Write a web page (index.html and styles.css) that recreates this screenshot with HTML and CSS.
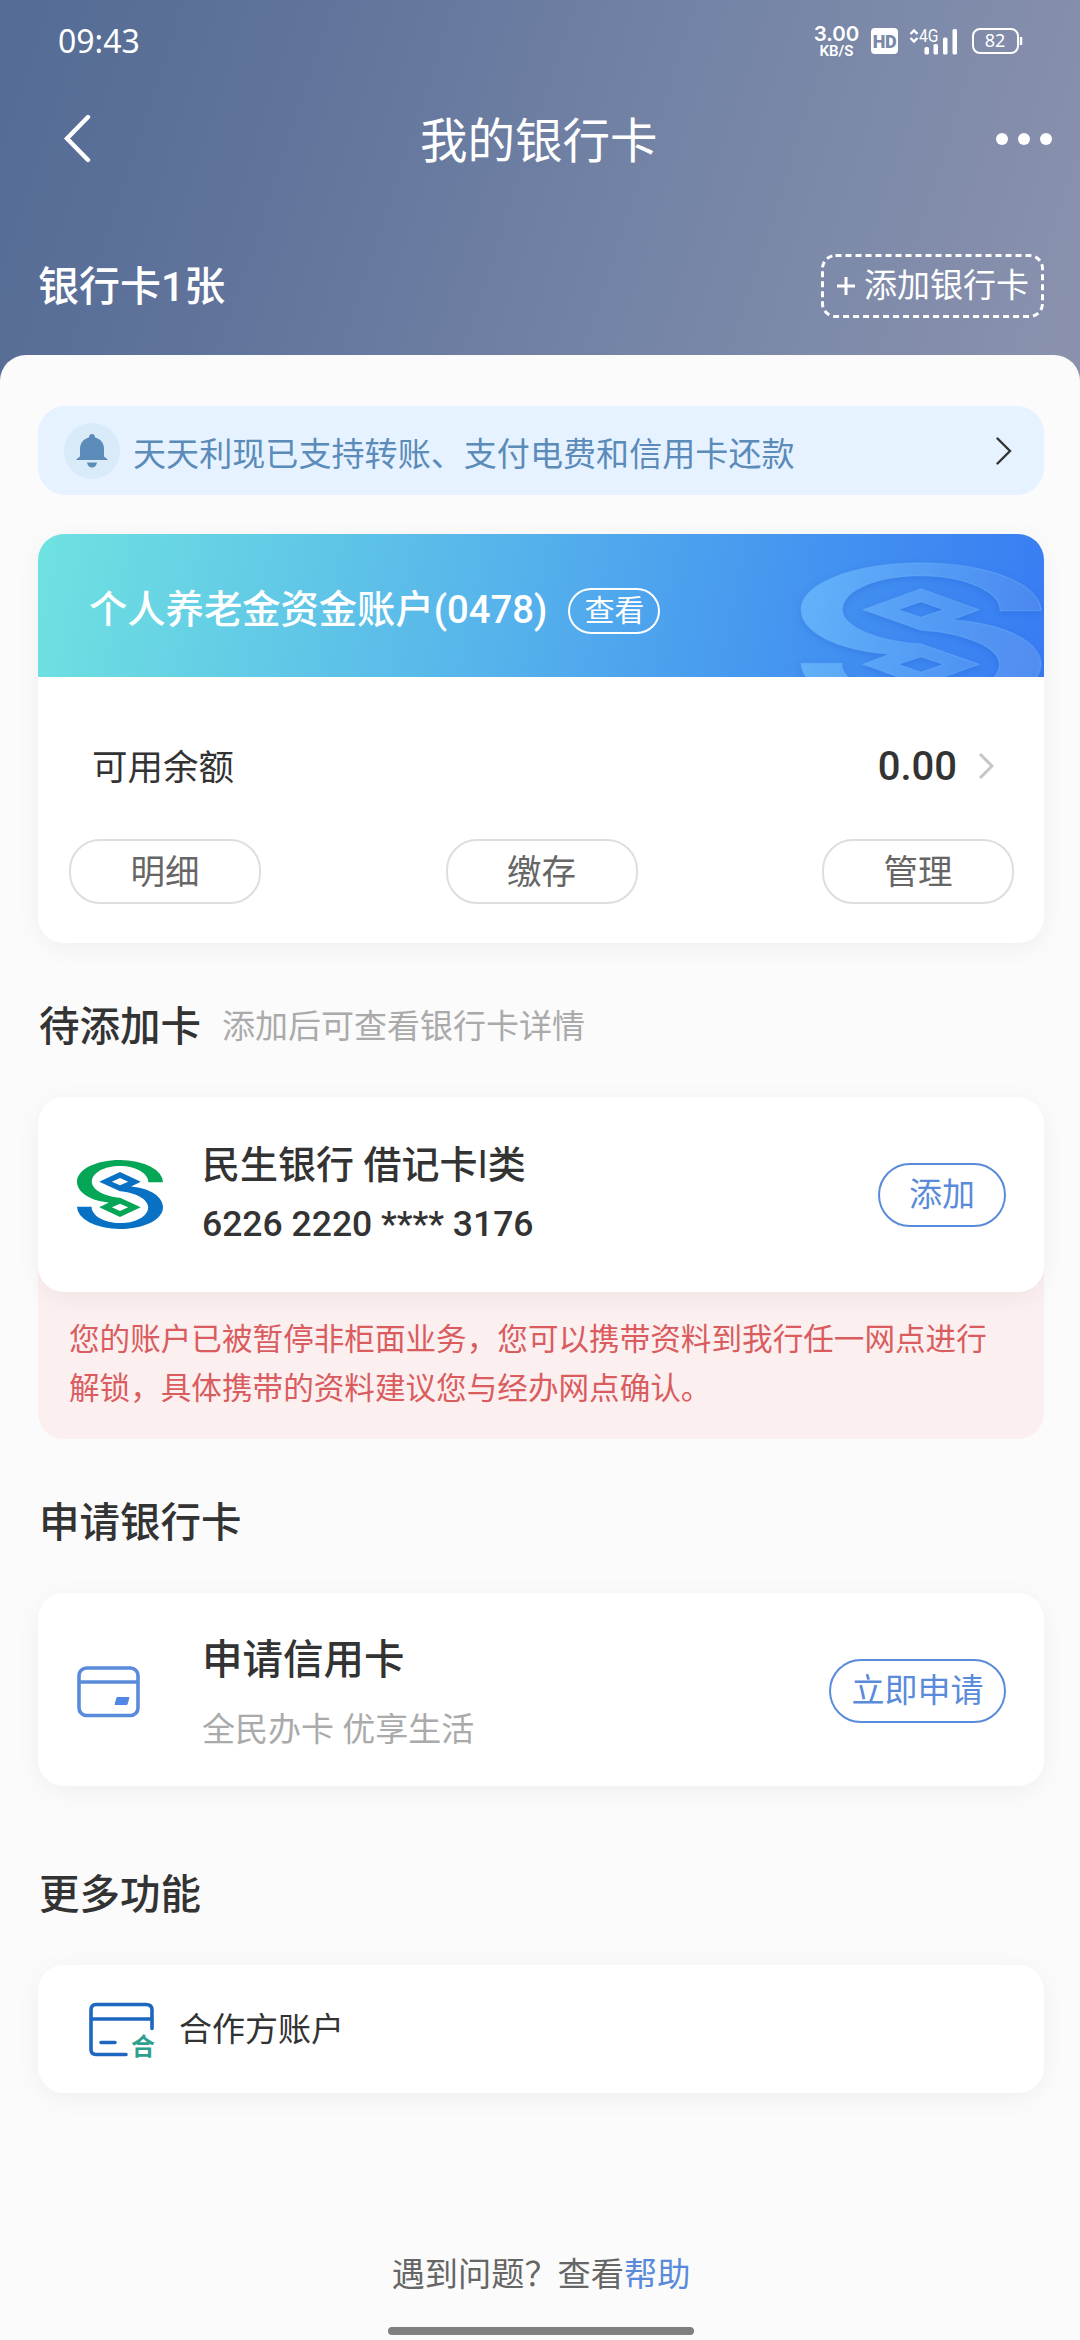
FILE: index.html
```html
<!DOCTYPE html>
<html lang="zh-CN">
<head>
<meta charset="utf-8">
<title>我的银行卡</title>
<link rel="stylesheet" href="styles.css">
</head>
<body>
<svg class="defs" width="0" height="0" aria-hidden="true">
  <defs>
    <path id="logo-upper" fill-rule="evenodd" d="M696 143A348 143 0 0 0 348 0C150 0 0 62 0 140C0 205 100 262 258 273L180 304L348 367L516 304L348 243C220 235 120 190 120 140C120 82 220 38 348 38C475 38 578 85 578 143ZM282 304L348 281L414 304L348 328Z"/>
  </defs>
</svg>
<div class="page">
  <header class="hero">
    <div class="status">
      <span class="clock">09:43</span>
      <div class="speed"><b>3.00</b><small>KB/S</small></div>
      <span class="hd">HD</span>
      <svg class="signal" viewBox="0 -6 50 40" width="50" height="40">
        <path d="M2.500 7L6 3.500L9.500 7M2.500 11L6 14.500L9.500 11" fill="none" stroke="#fff" stroke-width="2.400"/>
        <text x="11" y="15" font-size="18" textLength="19.500" lengthAdjust="spacingAndGlyphs" fill="#fff">4G</text>
        <g fill="#fff"><rect x="16.500" y="20" width="4.500" height="7.500" rx="1.500"/><rect x="25.500" y="17" width="4.500" height="10.500" rx="1.500"/><rect x="35" y="10.500" width="4.500" height="17" rx="1.500"/><rect x="44.500" y="2" width="4.500" height="25.500" rx="1.500"/></g>
      </svg>
      <svg class="battery" viewBox="0 0 51 26" width="51" height="26">
        <rect x="1" y="1" width="45" height="24" rx="7" fill="none" stroke="#fff" stroke-width="2"/>
        <path d="M49 9V17" stroke="#fff" stroke-width="2.500"/>
        <text x="23" y="19" font-size="18" text-anchor="middle" fill="#fff">82</text>
      </svg>
    </div>
    <nav class="nav">
      <svg class="back" viewBox="0 0 28 48" width="28" height="48"><path d="M25 2L4 23.500L25 45" fill="none" stroke="#fff" stroke-width="4.400" stroke-linecap="round"/></svg>
      <h1>我的银行卡</h1>
      <svg class="dots" viewBox="0 0 58 14" width="58" height="14" fill="#fff"><circle cx="7" cy="7" r="6"/><circle cx="29" cy="7" r="6"/><circle cx="51" cy="7" r="6"/></svg>
    </nav>
    <div class="summary">
      <h2>银行卡1张</h2>
      <button class="add-card">
        <svg class="dash" width="223" height="64" viewBox="0 0 223 64"><rect x="1.500" y="1.500" width="220" height="61" rx="13" fill="none" stroke="#fff" stroke-width="3" stroke-dasharray="6 4"/></svg>
        <svg width="18" height="18" viewBox="0 0 18 18"><path d="M9 0V18M0 9H18" stroke="#fff" stroke-width="3"/></svg>
        <span>添加银行卡</span>
      </button>
    </div>
  </header>
  <main class="sheet">
    <div class="notice">
      <span class="bell"><svg viewBox="0 0 32 34" width="32" height="34" fill="#5b8bb9"><path d="M16 0C18 0 19 1.500 19 3.500C25 5 28 9.500 28 15V22C28 23.500 31.500 24 31.500 26H.5C.5 24 4 23.500 4 22V15C4 9.500 7 5 13 3.500C13 1.500 14 0 16 0ZM11 28.500H21C20.500 31.500 18.500 33.500 16 33.500S11.500 31.500 11 28.500Z"/></svg></span>
      <span class="notice-text">天天利现已支持转账、支付电费和信用卡还款</span>
      <svg class="chev" viewBox="0 0 16 28" width="16" height="28"><path d="M1.500 1.500L14 14L1.500 26.500" fill="none" stroke="#333" stroke-width="2.400" stroke-linecap="round"/></svg>
    </div>

    <section class="card account">
      <div class="account-head">
        <span class="account-name">个人养老金资金账户(0478)</span>
        <span class="view">查看</span>
        <svg class="watermark" viewBox="-6 -6 708 456" preserveAspectRatio="none">
          <defs>
            <linearGradient id="wm" gradientUnits="userSpaceOnUse" x1="0" y1="150" x2="696" y2="250"><stop offset="0" stop-color="#62b2fa"/><stop offset=".6" stop-color="#5298f4"/><stop offset="1" stop-color="#4a86ef"/></linearGradient>
            <linearGradient id="wm-turned" gradientUnits="userSpaceOnUse" x1="696" y1="294" x2="0" y2="194"><stop offset="0" stop-color="#62b2fa"/><stop offset=".6" stop-color="#5298f4"/><stop offset="1" stop-color="#528df0"/></linearGradient>
          </defs>
          <g stroke="#6bb0f8" stroke-opacity=".45" stroke-width="4"><use href="#logo-upper" fill="url(#wm)"/><use href="#logo-upper" fill="url(#wm-turned)" transform="rotate(180 348 222)"/></g>
        </svg>
      </div>
      <div class="balance">
        <span>可用余额</span>
        <b>0.00</b>
        <svg viewBox="0 0 16 26" width="16" height="26"><path d="M2 1L14 13L2 25" fill="none" stroke="#c6c6c6" stroke-width="3"/></svg>
      </div>
      <div class="actions"><button>明细</button><button>缴存</button><button>管理</button></div>
    </section>

    <div class="heading pending-heading"><h3>待添加卡</h3><span>添加后可查看银行卡详情</span></div>
    <section class="pending">
      <div class="card row">
        <svg class="logo" viewBox="0 0 696 444" preserveAspectRatio="none"><use href="#logo-upper" fill="#05a655"/><use href="#logo-upper" transform="rotate(180 348 222)" fill="#0871c3"/></svg>
        <div class="info"><p class="bank">民生银行 借记卡<span class="class-mark">I</span>类</p><p class="number">6226 2220 **** 3176</p></div>
        <button class="pill add">添加</button>
      </div>
      <p class="warning">您的账户已被暂停非柜面业务，您可以携带资料到我行任一网点进行解锁，具体携带的资料建议您与经办网点确认。</p>
    </section>

    <div class="heading apply-heading"><h3>申请银行卡</h3></div>
    <section class="card row apply">
      <svg class="credit" viewBox="0 0 64 52" width="64" height="52" fill="none" stroke="#5a8bdb" stroke-width="3.600"><rect x="2" y="2" width="59" height="47.500" rx="7.500"/><path d="M2 16H61"/><path d="M40 31.500H52L50 38.500H38Z" fill="#5087e5" stroke="#5087e5" stroke-width="1"/></svg>
      <div class="info"><p class="apply-title">申请信用卡</p><p class="apply-sub">全民办卡 优享生活</p></div>
      <button class="pill now">立即申请</button>
    </section>

    <div class="heading more-heading"><h3>更多功能</h3></div>
    <section class="card partner">
      <svg viewBox="0 0 68 58" width="68" height="58" fill="none" stroke="#1e67bf" stroke-width="3.600" stroke-linecap="round"><path d="M38 53.500H8Q3 53.500 3 48.500V9Q3 3.500 8 3.500H58Q64 3.500 64 9V27.500M3 18H64M13 41.500H27"/><text x="43" y="54" font-size="24" font-weight="700" fill="#2fa090" stroke="none">合</text></svg>
      <span>合作方账户</span>
    </section>

    <footer><p>遇到问题？查看<a>帮助</a></p><i class="home-bar"></i></footer>
  </main>
</div>
</body>
</html>
```
FILE: styles.css
```css
* { box-sizing: border-box; margin: 0; padding: 0; }
body { width: 1080px; height: 2340px; overflow: hidden; font-family: Roboto, "Noto Sans CJK SC", sans-serif; color: #333; background: #fbfbfb; }
button { background: none; font: inherit; color: inherit; white-space: nowrap; }
svg { display: block; flex: none; }
.defs { position: absolute; }
h1, h2, h3 { white-space: nowrap; }
.page { width: 1080px; height: 2340px; display: flex; flex-direction: column; background: linear-gradient(108deg, #536b95 0, #61749b 320px, #7484a6 690px, #8991ad 1110px); }

.hero { height: 355px; color: #fff; display: flex; flex-direction: column; }
.status { height: 82px; display: flex; align-items: center; padding: 0 57px 0 58px; }
.clock { font-family: "Noto Sans", sans-serif; font-size: 32px; width: 758px; padding-bottom: 2px; }
.speed { width: 43px; display: flex; flex-direction: column; align-items: center; padding-top: 2px; }
.speed b { font-family: Inter, sans-serif; font-size: 20.500px; line-height: 19px; font-weight: 600; }
.speed small { font-family: Roboto, sans-serif; font-size: 15px; line-height: 17px; font-weight: 600; }
.hd { margin-left: 13px; width: 27px; height: 26px; border-radius: 4px; background: #fff; color: #7b89a9; font-weight: 900; font-size: 18px; line-height: 27px; text-align: center; letter-spacing: -.5px; }
.signal { margin-left: 10px; }
.battery { margin-left: 14px; font-family: "Noto Sans", sans-serif; }
.nav { height: 118px; display: grid; grid-template-columns: 357px 1fr auto; align-items: center; padding: 0 27px 5px 63px; }
.nav h1 { font-size: 47.500px; font-weight: 400; line-height: 70px; padding-top: 7px; }
.summary { height: 155px; display: flex; justify-content: space-between; align-items: center; padding: 17px 36px 0 38px; }
.summary h2 { font-size: 41px; font-weight: 500; line-height: 60px; padding-top: 2px; }
.add-card { position: relative; width: 223px; height: 64px; border: 0; display: flex; align-items: center; padding-left: 16px; gap: 9px; font-size: 33px; line-height: 60px; }
.dash { position: absolute; inset: 0; }

.sheet { flex: 1; background: #fbfbfb; border-radius: 26px 26px 0 0; padding: 51px 36px 0 38px; display: flex; flex-direction: column; }
.notice { height: 89px; border-radius: 27px; background: #e6f2ff; display: flex; align-items: center; padding: 0 32px 0 26px; color: #5b8bb9; }
.bell { width: 56px; height: 56px; border-radius: 50%; background: #d9eaf9; display: grid; place-items: center; }
.notice-text { flex: 1; margin-left: 13px; font-size: 33.100px; line-height: 50px; white-space: nowrap; padding-top: 8px; }

.card { background: #fff; border-radius: 26px; box-shadow: 0 5px 26px rgba(0,0,0,.05); }
.account { margin-top: 39px; height: 409px; display: flex; flex-direction: column; }
.account-head { position: relative; overflow: hidden; height: 143px; border-radius: 26px 26px 0 0; background: linear-gradient(101deg, #6fe2e1 0, #56b3eb 46%, #4494f0 75%, #387cf3 100%); color: #fff; display: flex; align-items: center; padding: 9px 0 0 51px; }
.account-name { font-size: 38.300px; font-weight: 500; line-height: 60px; white-space: nowrap; }
.view { margin-left: 21px; width: 92px; height: 46px; border: 2px solid #fff; border-radius: 23px; font-size: 30px; line-height: 41px; text-align: center; margin-top: 1px; }
.watermark { position: absolute; left: 761px; top: 27px; width: 244px; height: 152px; filter: drop-shadow(0 2px 3px rgba(20,80,200,.25)); }
.balance { height: 162px; display: flex; align-items: center; padding: 16px 50px 0 54px; font-size: 35.500px; }
.balance span { padding-bottom: 4px; }
.balance b { margin-left: auto; margin-right: 21px; font-size: 40px; font-weight: 500; }
.actions { display: flex; justify-content: space-between; padding: 0 30px 0 31px; }
.actions button { width: 192px; height: 65px; border: 2px solid #dedede; border-radius: 31px; font-size: 34.500px; line-height: 60px; color: #666; }

.heading { display: flex; align-items: center; height: 60px; padding: 1px 0 0 1px; }
.heading h3 { font-size: 40.500px; font-weight: 500; line-height: 60px; }
.heading span { margin-left: 21px; font-size: 33px; color: #aaa; padding-bottom: 5px; }
.pending-heading { margin-top: 53px; }
.pending { margin-top: 41px; background: #fbf0ef; border-radius: 26px; height: 342px; }
.row { height: 195px; display: flex; align-items: center; padding: 0 38px 0 39px; }
.logo { width: 86px; height: 69px; }
.info { flex: 1; white-space: nowrap; }
.row .logo + .info { margin-left: 39px; }
.bank { font-size: 38px; font-weight: 500; line-height: 58px; margin-top: -1px; }
.class-mark { font-weight: 400; }
.number { font-size: 35.500px; font-weight: 500; line-height: 58px; padding-top: 1px; }
.pill { height: 64px; border: 2px solid #5a8bdb; border-radius: 32px; color: #5a8bdb; font-size: 33px; line-height: 58px; }
.add { width: 128px; }
.now { width: 177px; margin-top: 3px; }
.warning { padding: 24px 30px 0 31px; font-size: 30.600px; line-height: 48.500px; color: #da5c5f; word-break: break-all; }

.apply-heading { margin-top: 53px; }
.apply { margin-top: 41px; height: 193px; }
.credit { margin-top: 4px; }
.apply .info { margin-left: 61px; }
.apply-title { font-size: 40.500px; font-weight: 500; line-height: 60px; padding-top: 10px; }
.apply-sub { margin-top: 10px; font-size: 33px; line-height: 60px; color: #aaa; }
.more-heading { margin-top: 78px; }
.partner { margin-top: 41px; height: 128px; display: flex; align-items: center; padding-left: 50px; font-size: 33px; gap: 23px; }
.partner svg { margin-top: 1px; }
.partner span { padding-bottom: 4px; }

footer { margin-top: auto; height: 91px; display: flex; flex-direction: column; align-items: center; font-size: 33.200px; color: #666; }
footer p { line-height: 50px; padding-top: 1px; }
footer a { color: #5a8bdb; }
.home-bar { margin-top: 27px; width: 306px; height: 8px; border-radius: 4px; background: #7f7f7f; }
```
